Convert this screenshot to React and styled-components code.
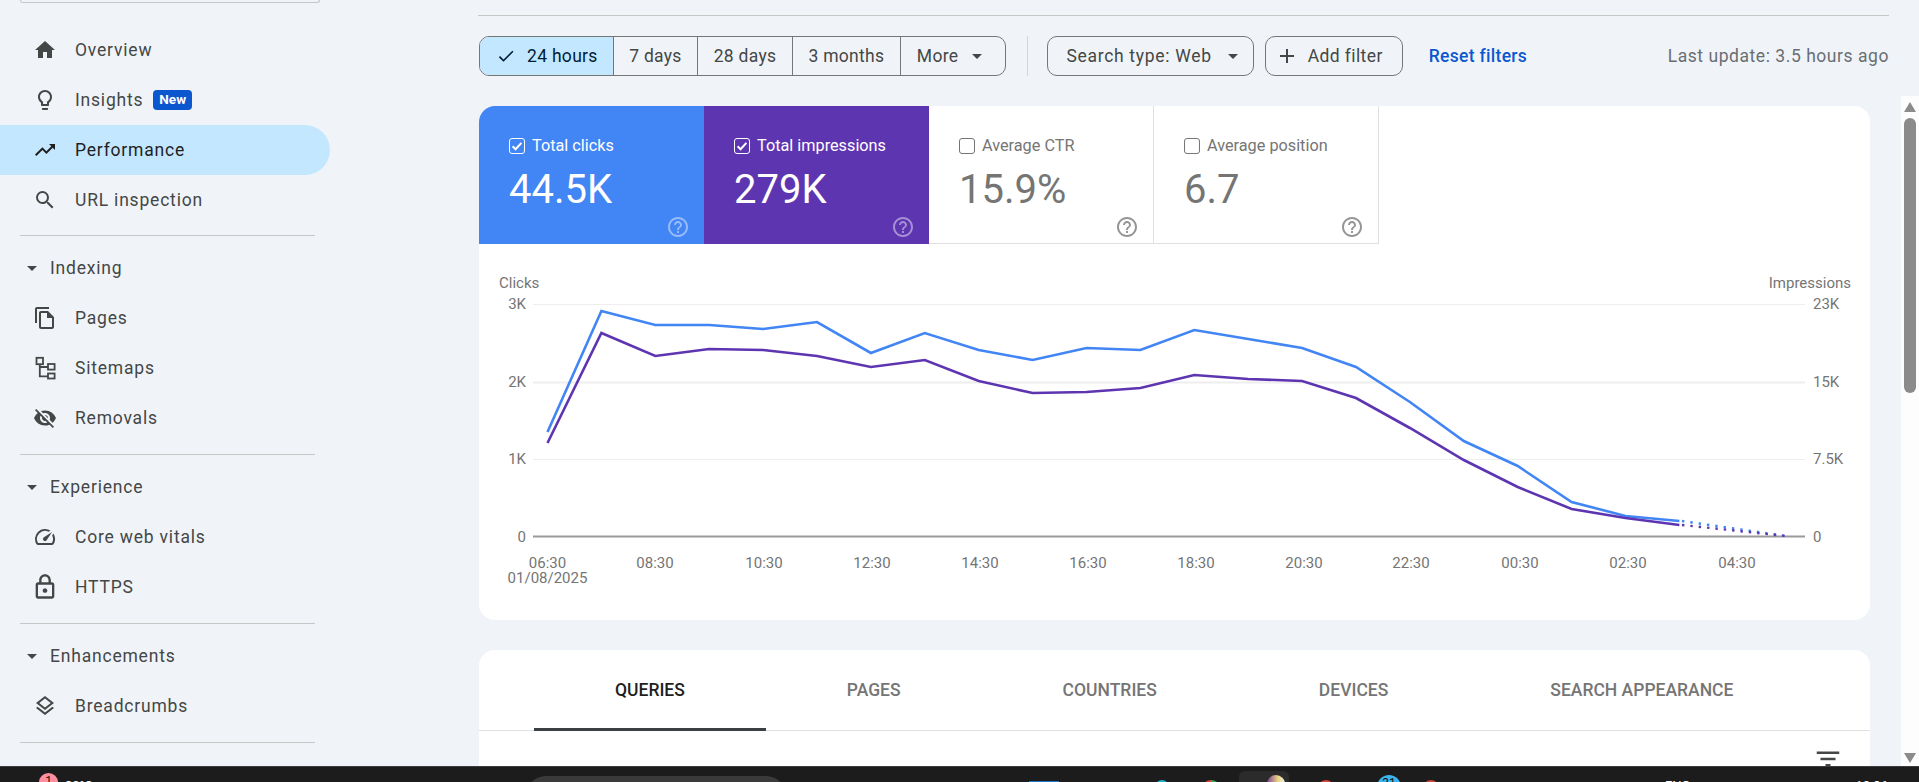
import styled, { createGlobalStyle } from 'styled-components'
import {
    MdHome, MdOutlineLightbulb, MdTrendingUp, MdSearch, MdOutlineFileCopy, MdVisibilityOff,
    MdOutlineSpeed, MdOutlineLock, MdOutlineLayers, MdArrowDropDown, MdCheck, MdAdd,
    MdHelpOutline, MdFilterList,
} from 'react-icons/md'

const GlobalStyle = createGlobalStyle`
    html, body {
        margin: 0;
        height: 782px;
        overflow: hidden;
        background: #f0f4f9;
        font-family: Roboto, "Liberation Sans", sans-serif;
    }
`

const Page = styled.div`
    display: flex;
    flex-direction: column;
    height: 782px;
    overflow: hidden;
`
const Body = styled.div`
    display: flex;
    flex: 1;
    min-height: 0;
`

// left nav
const Sidebar = styled.nav`
    width: 478px;
    flex-shrink: 0;
    color: #444746;
`
const SearchStub = styled.div`
    width: 298px;
    height: 2px;
    margin: 0 0 22px 20px;
    border: 1px solid #c4c7c5;
    border-top: none;
    border-radius: 0 0 14px 14px;
`
const NavRow = styled.div`
    display: flex;
    align-items: center;
    width: 330px;
    height: 50px;
    box-sizing: border-box;
    padding-left: 33px;
    gap: 18px;
    font-size: 17.5px;
    letter-spacing: 0.8px;
    border-radius: 0 25px 25px 0;
    background: ${(p) => (p.$active ? '#c2e7ff' : 'transparent')};
    color: ${(p) => (p.$active ? '#1f1f1f' : '#444746')};
`
const SectionRow = styled.div`
    display: flex;
    align-items: center;
    height: 50px;
    padding-left: 20px;
    gap: 6px;
    font-size: 17.5px;
    letter-spacing: 0.8px;
`
const Badge = styled.span`
    margin-left: -8px;
    padding: 0 6px;
    height: 20px;
    line-height: 19px;
    background: #0b57d0;
    color: #fff;
    border-radius: 4px;
    font-size: 13.5px;
    font-weight: 700;
    letter-spacing: 0;
`
const LockIcon = styled(MdOutlineLock)`
    margin: 0 -2px;
`
const Divider = styled.div`
    width: 295px;
    height: 1px;
    margin: ${(p) => (p.$first ? '10px 0 7px 20px' : '11px 0 7px 20px')};
    background: #c4c7c5;
`

// right side
const Main = styled.main`
    flex: 1;
    min-width: 0;
    display: flex;
    flex-direction: column;
`
const TopRule = styled.div`
    height: 1px;
    margin: 15px 30px 0 0;
    background: #c4c7c5;
`
const FilterBar = styled.div`
    display: flex;
    align-items: center;
    height: 40px;
    margin: 20px 30px 20px 1px;
`
const Segments = styled.div`
    display: flex;
    height: 40px;
    box-sizing: border-box;
    border: 1px solid #747775;
    border-radius: 10px;
    overflow: hidden;
`
const Segment = styled.div`
    display: flex;
    align-items: center;
    padding: ${(p) => p.$pad || '0 15.5px'};
    font-size: 17.5px;
    letter-spacing: 0.3px;
    color: ${(p) => (p.$on ? '#001d35' : '#444746')};
    background: ${(p) => (p.$on ? '#c2e7ff' : 'transparent')};
    & + & {
        border-left: 1px solid #747775;
    }
`
const CheckIcon = styled(MdCheck)`
    margin-right: 11px;
`
const MoreArrow = styled(MdArrowDropDown)`
    margin-left: ${(p) => p.$gap}px;
`
const VBar = styled.div`
    width: 1px;
    height: 40px;
    margin: 0 19px 0 21px;
    background: #d3d6da;
`
const Chip = styled.div`
    display: flex;
    align-items: center;
    height: 40px;
    box-sizing: border-box;
    padding: ${(p) => p.$pad};
    margin-right: 11px;
    border: 1px solid #747775;
    border-radius: 10px;
    font-size: 17.5px;
    letter-spacing: ${(p) => p.$ls || 0.4}px;
    color: #444746;
`
const PlusIcon = styled(MdAdd)`
    margin-right: 9px;
`
const ResetLink = styled.a`
    margin-left: 15px;
    font-size: 17.5px;
    font-weight: 500;
    letter-spacing: 0.3px;
    color: #0b57d0;
`
const LastUpdate = styled.div`
    margin-left: auto;
    font-size: 17.5px;
    letter-spacing: 0.55px;
    color: #6a6e72;
`

const ScrollPane = styled.div`
    flex: 1;
    min-height: 0;
    display: flex;
`
const Content = styled.div`
    flex: 1;
    min-width: 0;
    padding: 10px 31px 0 1px;
    overflow: hidden;
`
const Scrollbar = styled.div`
    width: 18px;
    flex-shrink: 0;
    background: #fdfdfd;
    display: flex;
    flex-direction: column;
    align-items: center;
    padding: 6px 0 3px;
    box-sizing: border-box;
`
const ArrowUp = styled.div`
    border: 6.5px solid transparent;
    border-top: none;
    border-bottom: 10px solid #8b8b8b;
`
const ArrowDown = styled.div`
    margin-top: auto;
    border: 6.5px solid transparent;
    border-bottom: none;
    border-top: 10px solid #8b8b8b;
`
const Thumb = styled.div`
    width: 12px;
    height: 275px;
    margin-top: 6px;
    border-radius: 6px;
    background: #8b8b8b;
`

const Panel = styled.section`
    background: #fff;
    border-radius: 16px;
    overflow: hidden;
`
const ChartPanel = styled(Panel)`
    height: 514px;
`
const Cards = styled.div`
    display: flex;
    height: 138px;
`
const ScoreCard = styled.div`
    width: 225px;
    box-sizing: border-box;
    display: flex;
    flex-direction: column;
    padding: 30px 14px 14px 30px;
    background: ${(p) => p.$bg || '#fff'};
    color: ${(p) => (p.$bg ? '#fff' : '#757575')};
    border-right: ${(p) => (p.$bg ? 'none' : '1px solid #e0e0e0')};
    border-bottom: ${(p) => (p.$bg ? 'none' : '1px solid #e0e0e0')};
`
const CardLabel = styled.div`
    display: flex;
    align-items: center;
    gap: 7px;
    height: 20px;
    font-size: 16.25px;
`
const CardValue = styled.div`
    margin-top: 10px;
    font-size: 40px;
    line-height: 50px;
`
const CardHelp = styled.div`
    display: flex;
    margin-top: auto;
    align-self: flex-end;
    color: ${(p) => (p.$light ? 'rgba(255,255,255,0.45)' : '#959595')};
`
const ChartSvg = styled.svg`
    display: block;
`
const AxisText = styled.text`
    font-family: Roboto, "Liberation Sans", sans-serif;
    font-size: 15px;
    fill: #757575;
    text-anchor: ${(p) => p.$anchor || 'middle'};
`

const TablePanel = styled(Panel)`
    margin-top: 30px;
    height: 200px;
`
const Tabs = styled.div`
    display: flex;
    height: 81px;
    box-sizing: border-box;
    padding-left: 55px;
    border-bottom: 1px solid #e0e0e0;
`
const Tab = styled.div`
    display: flex;
    align-items: center;
    height: 81px;
    box-sizing: border-box;
    padding: 2px 81px 0;
    font-size: 17.5px;
    font-weight: 500;
    text-transform: uppercase;
    color: ${(p) => (p.$on ? '#1f1f1f' : '#757575')};
    border-bottom: 3px solid ${(p) => (p.$on ? '#3c4043' : 'transparent')};
`
const TableTools = styled.div`
    display: flex;
    justify-content: flex-end;
    padding: 13px 27px 0 0;
    color: #444746;
`

// windows taskbar, only its top edge is on screen
const TaskBar = styled.footer`
    display: flex;
    align-items: flex-start;
    height: 16px;
    box-sizing: border-box;
    flex-shrink: 0;
    padding-left: 39px;
    overflow: hidden;
    background: #1c1c1c;
    border-top: 1px solid #3c3c3c;
`
const TrayBlock = styled.div`
    flex-shrink: 0;
    display: flex;
    justify-content: flex-end;
    width: ${(p) => p.$w}px;
    height: ${(p) => p.$h || 30}px;
    margin-left: ${(p) => p.$ml}px;
    margin-top: ${(p) => p.$top}px;
    background: ${(p) => p.$color};
    border-radius: ${(p) => p.$r || 0}px;
`
const TrayCount = styled.span`
    width: 100%;
    font-size: 12px;
    line-height: 16px;
    text-align: center;
    color: #111;
`
const TileIcon = styled.div`
    width: 18px;
    height: 18px;
    margin: 4px 4px 0 0;
    border-radius: 9px;
    background: linear-gradient(90deg, #7b3fa0 0%, #e8d27a 60%, #f2f2f2 100%);
`
const TrayText = styled.span`
    flex-shrink: 0;
    margin-left: ${(p) => p.$ml}px;
    margin-top: 11px;
    font-size: 13px;
    line-height: 16px;
    color: #fff;
`

const Sitemap = () => (
    <svg width="24" height="24" viewBox="0 0 24 24" fill="none" stroke="currentColor" strokeWidth="1.8">
        <rect x="3.5" y="1.8" width="6.5" height="6.4" />
        <rect x="15" y="8" width="6.6" height="5.6" />
        <rect x="15" y="17.5" width="6.6" height="5" />
        <path d="M6.8 8v12.4H15M6.8 11H15" />
    </svg>
)

const Tick = ({ on }) => (
    <svg width="16" height="16" viewBox="0 0 16 16" fill="none" stroke="currentColor">
        <rect x="0.5" y="0.5" width="15" height="15" rx="2.5" />
        {on && <path d="M3.6 8.2l3 3 5.8-6.4" strokeWidth="2" />}
    </svg>
)

const Y_LINES = [304, 382, 459, 536]

const xAt = (i) => 547.5 + 53.9 * i
const BLUE = [432, 311, 325, 325, 329, 322, 353, 333, 350, 360, 348, 350, 330, 339, 348, 367, 402, 441, 466, 502, 516, 521]
const PURPLE = [443, 333, 356, 349, 350, 356, 367, 360, 381, 393, 392, 388, 375, 379, 381, 398, 428, 460, 487, 509, 518, 525]
const toPoints = (ys) => ys.map((y, i) => `${xAt(i).toFixed(1)},${y}`).join(' ')

const X_LABELS = [
    ['06:30', 547.5], ['08:30', 655], ['10:30', 764], ['12:30', 872], ['14:30', 980], ['16:30', 1088],
    ['18:30', 1196], ['20:30', 1304], ['22:30', 1411], ['00:30', 1520], ['02:30', 1628], ['04:30', 1737],
]
const Y_LEFT = [['3K', 304], ['2K', 382], ['1K', 459], ['0', 537]]
const Y_RIGHT = [['23K', 304], ['15K', 382], ['7.5K', 459], ['0', 537]]

const Chart = () => (
    <ChartSvg width="1391" height="375" viewBox="479 244 1391 375">
        {Y_LINES.map((y, i) => (
            <line key={y} x1="533" x2="1805" y1={y + 0.5} y2={y + 0.5} stroke={i === 3 ? '#9a9a9a' : '#eeeeee'} strokeWidth={i === 3 || i === 1 ? 2 : 1} />
        ))}
        <polyline points={toPoints(BLUE)} fill="none" stroke="#4285f4" strokeWidth="2.6" />
        <polyline points={toPoints(PURPLE)} fill="none" stroke="#5e35b1" strokeWidth="2.6" />
        <polyline points="1682,521 1786,536" fill="none" stroke="#4285f4" strokeWidth="2.4" strokeDasharray="2.4 6" />
        <polyline points="1682,525 1786,536" fill="none" stroke="#5e35b1" strokeWidth="2.4" strokeDasharray="2.4 6" />
        <AxisText x="499" y="288" $anchor="start">Clicks</AxisText>
        <AxisText x="1851" y="288" $anchor="end">Impressions</AxisText>
        {Y_LEFT.map(([t, y]) => <AxisText key={t} x="526" y={y + 5} $anchor="end">{t}</AxisText>)}
        {Y_RIGHT.map(([t, y]) => <AxisText key={t} x="1813" y={y + 5} $anchor="start">{t}</AxisText>)}
        {X_LABELS.map(([t, x]) => <AxisText key={t} x={x} y="568">{t}</AxisText>)}
        <AxisText x="547.5" y="583">01/08/2025</AxisText>
    </ChartSvg>
)

const CARDS = [
    { label: 'Total clicks', value: '44.5K', bg: '#4285f4', on: true },
    { label: 'Total impressions', value: '279K', bg: '#5e35b1', on: true },
    { label: 'Average CTR', value: '15.9%' },
    { label: 'Average position', value: '6.7' },
]

const App = () => {
    return (
        <Page>
            <GlobalStyle />
            <Body>
                <Sidebar>
                    <SearchStub />
                    <NavRow><MdHome size={24} />Overview</NavRow>
                    <NavRow><MdOutlineLightbulb size={24} />Insights<Badge>New</Badge></NavRow>
                    <NavRow $active><MdTrendingUp size={24} />Performance</NavRow>
                    <NavRow><MdSearch size={24} />URL inspection</NavRow>
                    <Divider $first />
                    <SectionRow><MdArrowDropDown size={24} />Indexing</SectionRow>
                    <NavRow><MdOutlineFileCopy size={24} />Pages</NavRow>
                    <NavRow><Sitemap />Sitemaps</NavRow>
                    <NavRow><MdVisibilityOff size={24} />Removals</NavRow>
                    <Divider />
                    <SectionRow><MdArrowDropDown size={24} />Experience</SectionRow>
                    <NavRow><MdOutlineSpeed size={24} />Core web vitals</NavRow>
                    <NavRow><LockIcon size={28} />HTTPS</NavRow>
                    <Divider />
                    <SectionRow><MdArrowDropDown size={24} />Enhancements</SectionRow>
                    <NavRow><MdOutlineLayers size={24} />Breadcrumbs</NavRow>
                    <Divider />
                </Sidebar>

                <Main>
                    <TopRule />
                    <FilterBar>
                        <Segments>
                            <Segment $on $pad="0 15px 0 16px"><CheckIcon size={20} />24 hours</Segment>
                            <Segment>7 days</Segment>
                            <Segment>28 days</Segment>
                            <Segment>3 months</Segment>
                            <Segment $pad="0 16px 0 16px">More<MoreArrow size={24} $gap={7} /></Segment>
                        </Segments>
                        <VBar />
                        <Chip $pad="0 8px 0 18px" $ls={0.7}>Search type: Web<MoreArrow size={24} $gap={9} /></Chip>
                        <Chip $pad="0 19px 0 9px"><PlusIcon size={24} />Add filter</Chip>
                        <ResetLink>Reset filters</ResetLink>
                        <LastUpdate>Last update: 3.5 hours ago</LastUpdate>
                    </FilterBar>

                    <ScrollPane>
                        <Content>
                            <ChartPanel>
                                <Cards>
                                    {CARDS.map((c) => (
                                        <ScoreCard key={c.label} $bg={c.bg}>
                                            <CardLabel>
                                                <Tick on={c.on} />
                                                {c.label}
                                            </CardLabel>
                                            <CardValue>{c.value}</CardValue>
                                            <CardHelp $light={c.on}><MdHelpOutline size={24} /></CardHelp>
                                        </ScoreCard>
                                    ))}
                                </Cards>
                                <Chart />
                            </ChartPanel>

                            <TablePanel>
                                <Tabs>
                                    <Tab $on>Queries</Tab>
                                    <Tab>Pages</Tab>
                                    <Tab>Countries</Tab>
                                    <Tab>Devices</Tab>
                                    <Tab>Search appearance</Tab>
                                </Tabs>
                                <TableTools><MdFilterList size={30} /></TableTools>
                            </TablePanel>
                        </Content>
                        <Scrollbar>
                            <ArrowUp />
                            <Thumb />
                            <ArrowDown />
                        </Scrollbar>
                    </ScrollPane>
                </Main>
            </Body>

            <TaskBar>
                <TrayBlock $w={19} $h={19} $r={10} $ml={0} $top={6} $color="#ff8fa0"><TrayCount>1</TrayCount></TrayBlock>
                <TrayText $ml={7}>30°C</TrayText>
                <TrayBlock $w={260} $h={40} $r={20} $ml={433} $top={9} $color="#3a3a3a" />
                <TrayBlock $w={30} $ml={243} $top={14} $color="#1a73c9" />
                <TrayBlock $w={14} $r={7} $ml={96} $top={13} $color="#19b5c9" />
                <TrayBlock $w={20} $r={10} $ml={32} $top={13} $color="linear-gradient(90deg, #d9453a 50%, #34a853 50%)" />
                <TrayBlock $w={50} $r={6} $ml={18} $top={4} $color="#2b2b2b"><TileIcon /></TrayBlock>
                <TrayBlock $w={16} $r={8} $ml={29} $top={13} $color="#d9453a" />
                <TrayBlock $w={24} $r={12} $ml={43} $top={8} $color="#3db4f2"><TrayCount>31</TrayCount></TrayBlock>
                <TrayBlock $w={16} $r={8} $ml={22} $top={13} $color="#c9483a" />
                <TrayText $ml={226}>ENG</TrayText>
                <TrayText $ml={165}>10:36</TrayText>
            </TaskBar>
        </Page>
    )
}

export default App
